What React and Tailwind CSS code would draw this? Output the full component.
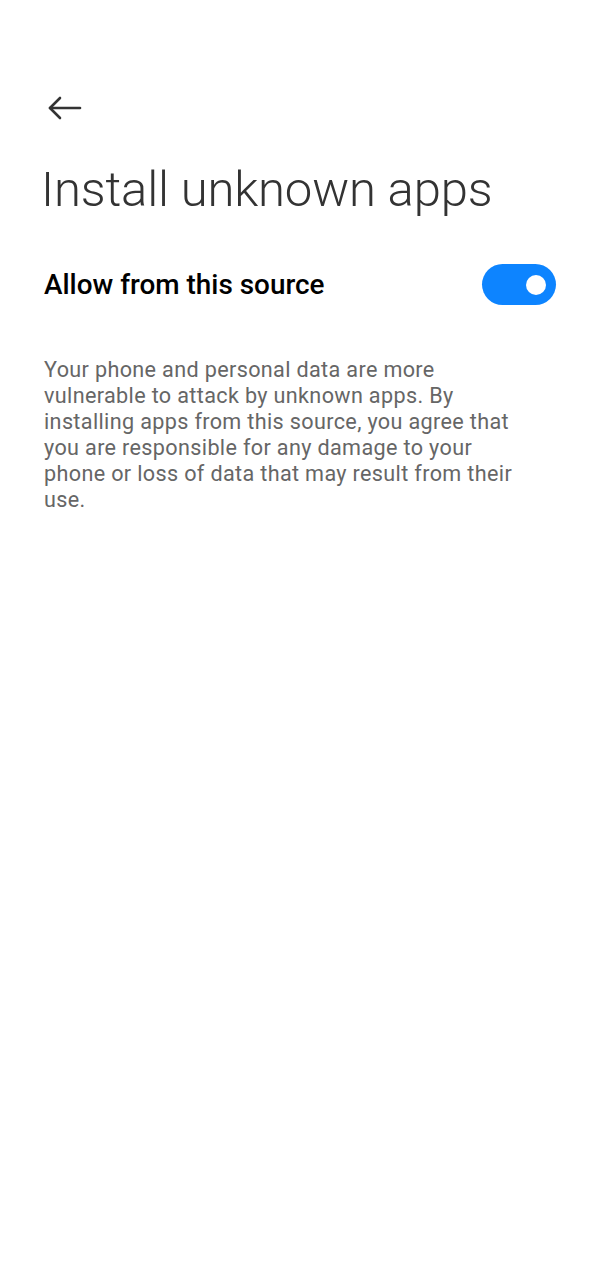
export default function App() {
  return (
    <div className="min-h-screen bg-white" style={{ fontFamily: 'Roboto, "Noto Sans", sans-serif' }}>
      <div className="px-[44px] pt-[95px]">
        <button className="block ml-[3px] text-[#333]">
          <svg width="36" height="26" viewBox="0 0 36 26" fill="none" stroke="currentColor" strokeWidth="2.6" strokeLinecap="round" strokeLinejoin="round">
            <path d="M3 13h30" />
            <path d="M13 3L3 13l10 10" />
          </svg>
        </button>
        <h1 className="mt-[38px] -ml-[3px] text-[49px] leading-[62px] font-light text-[#333] tracking-[-0.15px]">Install unknown apps</h1>
        <div className="mt-[43px] flex items-center justify-between">
          <span className="text-[27.9px] font-medium text-black">Allow from this source</span>
          <div className="w-[74px] h-[41px] rounded-full bg-[#0d84ff] flex items-center justify-end pr-[10px]">
            <div className="w-[20px] h-[20px] rounded-full bg-white" />
          </div>
        </div>
        <p className="mt-[51px] text-[21.6px] leading-[26px] tracking-[0.35px] text-[#666] pr-[32px]">
          Your phone and personal data are more vulnerable to attack by unknown apps. By installing apps from this source, you agree that you are responsible for any damage to your phone or loss of data that may result from their use.
        </p>
      </div>
    </div>
  )
}
